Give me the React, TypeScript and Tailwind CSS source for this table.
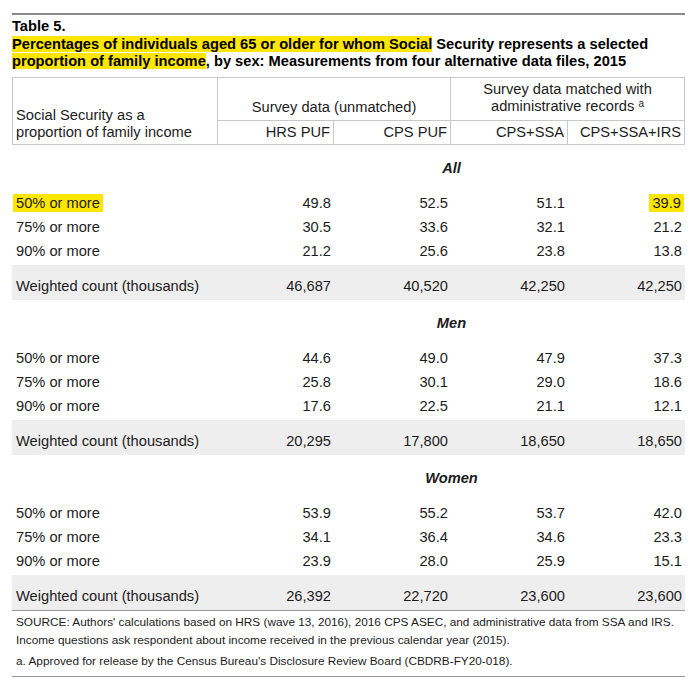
import React from "react";

type Row = { label: string; values: string[]; mark?: boolean };

interface ISection {
  title: string;
  rows: Row[];
  count: string[];
}

const sections: ISection[] = [
  {
    title: "All",
    rows: [
      { label: "50% or more", values: ["49.8", "52.5", "51.1", "39.9"], mark: true },
      { label: "75% or more", values: ["30.5", "33.6", "32.1", "21.2"] },
      { label: "90% or more", values: ["21.2", "25.6", "23.8", "13.8"] },
    ],
    count: ["46,687", "40,520", "42,250", "42,250"],
  },
  {
    title: "Men",
    rows: [
      { label: "50% or more", values: ["44.6", "49.0", "47.9", "37.3"] },
      { label: "75% or more", values: ["25.8", "30.1", "29.0", "18.6"] },
      { label: "90% or more", values: ["17.6", "22.5", "21.1", "12.1"] },
    ],
    count: ["20,295", "17,800", "18,650", "18,650"],
  },
  {
    title: "Women",
    rows: [
      { label: "50% or more", values: ["53.9", "55.2", "53.7", "42.0"] },
      { label: "75% or more", values: ["34.1", "36.4", "34.6", "23.3"] },
      { label: "90% or more", values: ["23.9", "28.0", "25.9", "15.1"] },
    ],
    count: ["26,392", "22,720", "23,600", "23,600"],
  },
];

const grid = "grid grid-cols-[206px_116px_117px_117px_117px]";

const Section: React.FC<{ s: ISection }> = ({ s }) => (
  <div>
    <div className={`${grid} h-[46px] items-center`}>
      <div className="col-start-2 col-span-4 text-center font-bold italic">{s.title}</div>
    </div>
    {s.rows.map((r, i) => (
      <div key={r.label} className={`${grid} h-[24px] items-center ${i === 2 ? "mb-[2px]" : ""}`}>
        <div className="pl-1">
          {r.mark ? <span className="bg-[#ffe600] -ml-[3px] px-[3px] py-px">{r.label}</span> : r.label}
        </div>
        {r.values.map((v, j) => (
          <div key={j} className="text-right pr-[3px]">
            {r.mark && j === 3 ? <span className="bg-[#ffe600] -mr-[2px] px-[3px] py-px">{v}</span> : v}
          </div>
        ))}
      </div>
    ))}
    <div className={`${grid} h-[35px] bg-[#eeeeee] pt-[13px]`}>
      <div className="pl-1">Weighted count (thousands)</div>
      {s.count.map((v, j) => (
        <div key={j} className="text-right pr-[3px]">
          {v}
        </div>
      ))}
    </div>
  </div>
);

export default function App() {
  return (
    <div className="w-[697px] min-h-[691px] bg-white pl-3 pt-[13px] font-['Liberation_Sans',Arial,sans-serif] text-[14.67px] leading-[17px] text-[#1c1c1c]">
      <div className="w-[673px]">
        <div className="border-t-2 border-[#8a8a8a] pt-[3px] font-bold text-black">
          <div>Table 5.</div>
          <div className="mt-px">
            <span className="bg-[#ffe600]">Percentages of individuals aged 65 or older for whom Social</span> Security
            represents a selected <span className="bg-[#ffe600]">proportion of family income</span>, by sex: Measurements
            from four alternative data files, 2015
          </div>
        </div>

        <div className="mt-[7px] flex border border-[#c8c8c8]">
          <div className="w-[205px] border-r border-[#c8c8c8] flex items-end pl-[3px] pb-[3px]">
            Social Security as a
            <br />
            proportion of family income
          </div>
          <div className="flex-1 flex flex-col">
            <div className="flex h-[43px] border-b border-[#c8c8c8]">
              <div className="w-[233px] border-r border-[#c8c8c8] flex items-end justify-center pb-[4px]">
                Survey data (unmatched)
              </div>
              <div className="flex-1 flex items-end justify-center text-center pb-[4px]">
                <div>
                  Survey data matched with
                  <br />
                  administrative records <span className="relative -top-[4px] text-[10px]">a</span>
                </div>
              </div>
            </div>
            <div className="flex h-[23px] items-center">
              <div className="w-[116px] border-r border-[#c8c8c8] h-full flex items-center justify-end pr-[3px]">
                HRS PUF
              </div>
              <div className="w-[117px] border-r border-[#c8c8c8] h-full flex items-center justify-end pr-[3px]">
                CPS PUF
              </div>
              <div className="w-[117px] border-r border-[#c8c8c8] h-full flex items-center justify-end pr-[3px]">
                CPS+SSA
              </div>
              <div className="flex-1 h-full flex items-center justify-end pr-[3px]">CPS+SSA+IRS</div>
            </div>
          </div>
        </div>

        {sections.map((s) => (
          <Section key={s.title} s={s} />
        ))}

        <div className="border-t border-b border-[#999] pl-1 pt-[2px] pb-[6px] leading-[18px]">
          <div className="text-[11.8px] whitespace-nowrap">
            SOURCE: Authors' calculations based on HRS (wave 13, 2016), 2016 CPS ASEC, and administrative data from SSA and IRS.
            <br />
            Income questions ask respondent about income received in the previous calendar year (2015).
          </div>
          <div className="mt-[3px] text-[11.8px]">
            a. Approved for release by the Census Bureau's Disclosure Review Board (CBDRB-FY20-018).
          </div>
        </div>
      </div>
    </div>
  );
}
